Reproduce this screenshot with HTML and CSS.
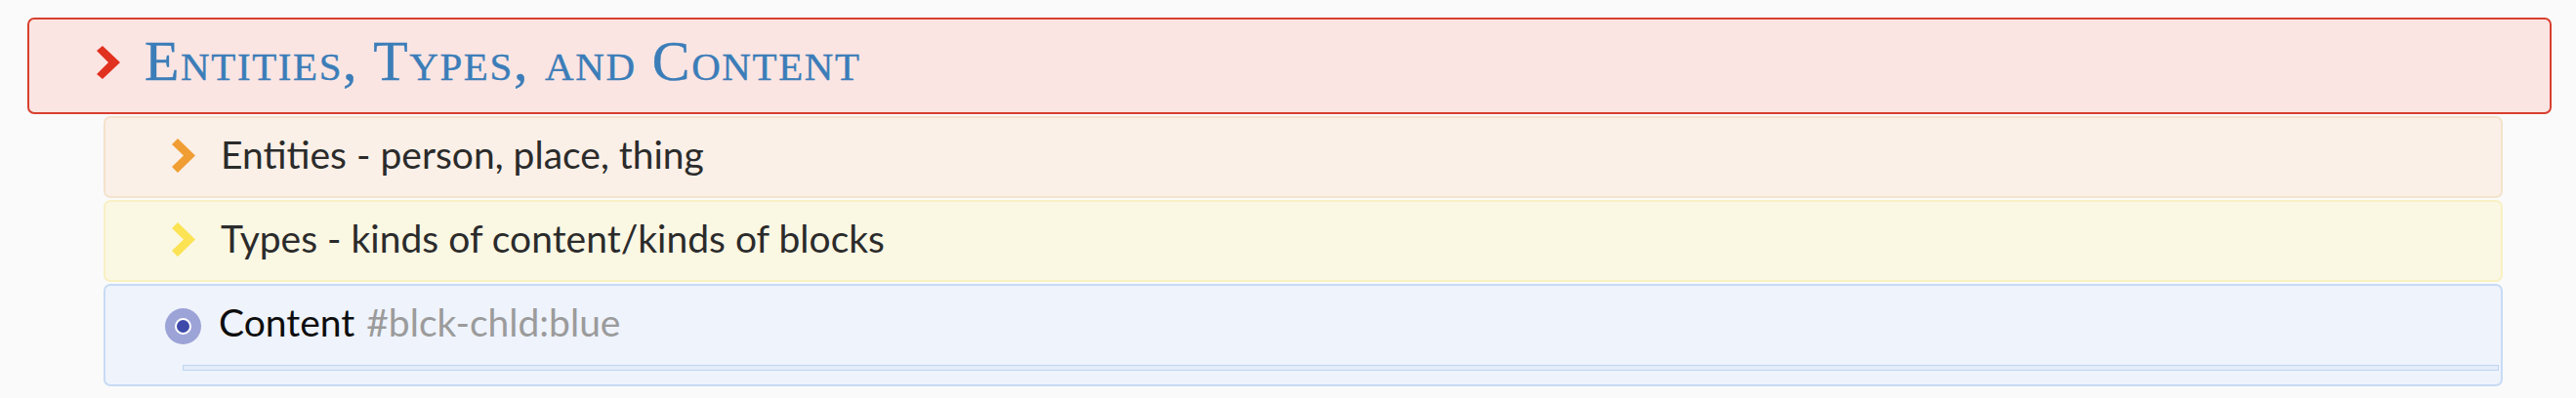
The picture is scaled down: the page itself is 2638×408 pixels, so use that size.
FILE: index.html
```html
<!DOCTYPE html>
<html lang="en">
<head>
<meta charset="utf-8">
<title>Entities, Types, and Content</title>
<link rel="stylesheet" href="styles.css">
</head>
<body>
<div class="page">
  <div class="block block-red">
    <div class="row row-head">
      <span class="chev chev-red">
        <svg viewBox="0 0 24 34" width="24" height="34"><polygon points="0,5 6,0 24,17 6,34 0,29 12,17" /></svg>
      </span>
      <h1 class="heading">Entities, Types, and Content</h1>
    </div>
  </div>
  <div class="children">
    <div class="block block-orange">
      <div class="row">
        <span class="chev chev-orange">
          <svg viewBox="0 0 24 35" width="24" height="35"><polygon points="0,6 6,0 24,17.5 6,35 0,29 12,17.5" /></svg>
        </span>
        <span class="text">Entities - person, place, thing</span>
      </div>
    </div>
    <div class="block block-yellow">
      <div class="row">
        <span class="chev chev-yellow">
          <svg viewBox="0 0 24 35" width="24" height="35"><polygon points="0,6 6,0 24,17.5 6,35 0,29 12,17.5" /></svg>
        </span>
        <span class="text">Types - kinds of content/kinds of blocks</span>
      </div>
    </div>
    <div class="block block-blue">
      <div class="row row-content">
        <span class="bullet"><span class="bullet-dot"></span></span>
        <span class="text text-dark">Content</span>
        <span class="tag">#blck-chld:blue</span>
      </div>
      <div class="child-line"></div>
    </div>
  </div>
</div>
</body>
</html>
```
FILE: styles.css
```css
html, body {
  margin: 0;
  padding: 0;
  background: #fafafa;
}

.page {
  padding: 18px 25px 0 28px;
  display: flex;
  flex-direction: column;
}

.block {
  box-sizing: border-box;
  border-radius: 7px;
  border: 2px solid transparent;
}

.block-red {
  height: 99px;
  background: #fbe5e3;
  border-color: #d8402f;
  display: flex;
  align-items: center;
}

.row {
  display: flex;
  align-items: center;
}

.row-head {
  padding-left: 69px;
  margin-top: -9px;
}

.chev {
  display: flex;
  align-items: center;
  flex: none;
}

.chev svg {
  display: block;
}

.chev-red { fill: #e1311f; margin-top: 1px; }
.chev-orange { fill: #f09d34; margin-top: 3px; }
.chev-yellow { fill: #fbe353; margin-top: 3px; }

.heading {
  margin: 0 0 0 25px;
  font-family: "Liberation Serif", "DejaVu Serif", serif;
  font-variant: small-caps;
  font-weight: normal;
  font-size: 58px;
  line-height: 1;
  letter-spacing: 1.6px;
  color: #3b7db8;
  -webkit-text-stroke: 0.4px #3b7db8;
}

.children {
  margin: 2px 50px 0 78px;
  display: flex;
  flex-direction: column;
  gap: 2px;
}

.block-orange {
  height: 84px;
  background: #faf0e7;
  border-color: #f4e2cc;
  display: flex;
  align-items: center;
  padding: 0 0 6px 68px;
}

.block-yellow {
  height: 84px;
  background: #faf7e3;
  border-color: #f8f0c4;
  display: flex;
  align-items: center;
  padding: 0 0 6px 68px;
}

.block-blue {
  height: 105px;
  background: #eff3fb;
  border-color: #c7dbf5;
  padding: 17px 0 0 61px;
}

.text {
  margin-left: 26px;
  font-family: Lato, "Noto Sans", sans-serif;
  font-size: 39px;
  line-height: 40px;
  color: #2b2b2b;
}

.text-dark {
  margin-left: 18px;
  color: #0d0d0d;
}

.tag {
  margin-left: 12px;
  font-family: Lato, "Noto Sans", sans-serif;
  font-size: 39px;
  line-height: 40px;
  color: #9b9b9b;
}

.row-content .bullet {
  margin: 4px 0 -4px 0;
}

.bullet {
  width: 37px;
  height: 37px;
  border-radius: 50%;
  background: #9ca3d7;
  display: flex;
  align-items: center;
  justify-content: center;
  flex: none;
}

.bullet-dot {
  width: 13px;
  height: 13px;
  border-radius: 50%;
  background: #3e4aa9;
  border: 2.5px solid #ffffff;
}

.child-line {
  margin: 24px 0 0 18px;
  width: 2372px;
  height: 6px;
  box-sizing: border-box;
  border: 1.5px solid #bfd5f3;
  background: #e3ecf9;
}
```
